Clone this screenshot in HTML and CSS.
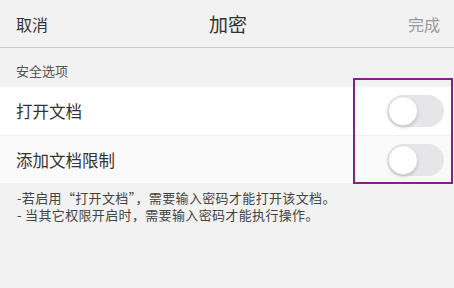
FILE: index.html
```html
<!DOCTYPE html>
<html lang="zh-CN">
<head>
<meta charset="utf-8">
<link rel="stylesheet" href="styles.css">
</head>
<body>
<div class="page">
  <header class="nav">
    <span class="nav-left">取消</span>
    <span class="nav-title">加密</span>
    <span class="nav-right">完成</span>
  </header>
  <div class="section-label">安全选项</div>
  <div class="list">
    <div class="row row-white">
      <span class="row-text">打开文档</span>
      <span class="toggle"><span class="knob"></span></span>
    </div>
    <div class="row row-grey">
      <span class="row-text">添加文档限制</span>
      <span class="toggle"><span class="knob"></span></span>
    </div>
  </div>
  <div class="note">
    <div class="note-line">-若启用“打开文档”，需要输入密码才能打开该文档。</div>
    <div class="note-line">- 当其它权限开启时，需要输入密码才能执行操作。</div>
  </div>
  <div class="highlight"></div>
</div>
</body>
</html>
```
FILE: styles.css
```css
html, body {
  margin: 0;
  padding: 0;
  background: #f2f2f2;
}
.page {
  position: relative;
  width: 454px;
  height: 288px;
  overflow: hidden;
  font-family: "Noto Sans CJK SC", "Noto Sans", sans-serif;
  color: #333;
}
.nav {
  height: 47px;
  display: grid;
  grid-template-columns: 1fr auto 1fr;
  align-items: center;
  padding: 0 14px 0 16px;
  border-bottom: 1px solid #c9c9c9;
}
.nav-left {
  font-size: 16px;
  color: #333;
  justify-self: start;
}
.nav-title {
  font-size: 19px;
  color: #333;
}
.nav-right {
  font-size: 16px;
  color: #9a9a9a;
  justify-self: end;
}
.section-label {
  height: 39px;
  box-sizing: border-box;
  display: flex;
  align-items: flex-end;
  padding: 0 0 7px 16px;
  font-size: 13px;
  color: #555;
  line-height: 18px;
}
.list {
  display: flex;
  flex-direction: column;
}
.row {
  height: 48px;
  display: flex;
  align-items: center;
  justify-content: space-between;
  padding: 0 10px 0 16px;
}
.row-white {
  background: #ffffff;
}
.row-grey {
  background: #fafafa;
  border-top: 1px solid #f0f0f0;
  height: 47px;
}
.row-text {
  font-size: 16.5px;
  color: #333;
}
.toggle {
  width: 57px;
  height: 32px;
  border-radius: 16px;
  background: #e6e6e8;
  display: flex;
  align-items: center;
  padding-left: 1px;
  box-sizing: border-box;
}
.knob {
  width: 30px;
  height: 30px;
  border-radius: 50%;
  background: #fff;
  box-sizing: border-box;
  border: 1px solid #dcdcdc;
  box-shadow: 0 2px 3px rgba(0,0,0,0.15);
}
.note {
  padding: 6px 16px 0 17px;
  font-size: 13px;
  letter-spacing: 0.35px;
  color: #444;
  display: flex;
  flex-direction: column;
}
.note-line {
  line-height: 17px;
  height: 17px;
  white-space: nowrap;
}
.highlight {
  position: absolute;
  left: 353px;
  top: 78px;
  width: 100px;
  height: 106px;
  box-sizing: border-box;
  border: 2px solid #86208f;
}
```
